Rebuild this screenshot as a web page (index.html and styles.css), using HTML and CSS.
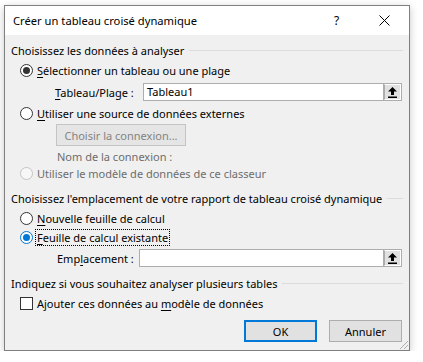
FILE: index.html
```html
<!DOCTYPE html>
<html lang="fr">
<head>
    <meta charset="UTF-8">
    <title>Créer un tableau croisé dynamique</title>
    <link rel="stylesheet" href="styles.css">
</head>
<body>
    <div class="dialog">
        <div class="title-bar">
            <div class="title-text">Créer un tableau croisé dynamique</div>
            <div class="title-help">?</div>
            <div class="title-close">
                <svg width="11" height="11" viewBox="0 0 11 11"><path d="M0.5 0.5 L10.5 10.5 M10.5 0.5 L0.5 10.5" stroke="#000" stroke-width="1"/></svg>
            </div>
        </div>

        <div class="dialog-body">
            <!-- Source des données -->
            <div class="group-head row-1">Choisissez les données à analyser</div>

            <div class="option row-2">
                <span class="radio checked-dark"></span>
                <span><u>S</u>électionner un tableau ou une plage</span>
            </div>

            <div class="field row-3">
                <span class="field-label"><u>T</u>ableau/Plage :</span>
                <div class="ref-input">
                    <span class="ref-value">Tableau1</span>
                    <span class="ref-btn">
                        <svg width="9" height="11" viewBox="0 0 9 11"><path d="M4.5 0 L9 4.5 L6 4.5 L6 8 L3 8 L3 4.5 L0 4.5 Z" fill="#000"/><rect x="0" y="9.5" width="9" height="1.5" fill="#000"/></svg>
                    </span>
                </div>
            </div>

            <div class="option row-4">
                <span class="radio"></span>
                <span><u>U</u>tiliser une source de données externes</span>
            </div>

            <div class="row-5">
                <button class="win-btn disabled-btn">Choisir la connexion...</button>
            </div>

            <div class="sub-label row-6">Nom de la connexion :</div>

            <div class="option disabled row-7">
                <span class="radio"></span>
                <span>Utiliser le modèle de données de ce classeur</span>
            </div>

            <!-- Emplacement -->
            <div class="group-head row-8">Choisissez l'emplacement de votre rapport de tableau croisé dynamique</div>

            <div class="option row-9">
                <span class="radio"></span>
                <span><u>N</u>ouvelle feuille de calcul</span>
            </div>

            <div class="option row-10">
                <span class="radio checked-blue"></span>
                <span class="focus-label"><u>F</u>euille de calcul existante</span>
            </div>

            <div class="field row-11">
                <span class="field-label narrow">Emp<u>l</u>acement :</span>
                <div class="ref-input">
                    <span class="ref-value"></span>
                    <span class="ref-btn">
                        <svg width="9" height="11" viewBox="0 0 9 11"><path d="M4.5 0 L9 4.5 L6 4.5 L6 8 L3 8 L3 4.5 L0 4.5 Z" fill="#000"/><rect x="0" y="9.5" width="9" height="1.5" fill="#000"/></svg>
                    </span>
                </div>
            </div>

            <!-- Plusieurs tables -->
            <div class="group-head row-12">Indiquez si vous souhaitez analyser plusieurs tables</div>

            <div class="option row-13">
                <span class="checkbox"></span>
                <span>Ajouter ces données au <u>m</u>odèle de données</span>
            </div>

            <div class="dialog-footer">
                <button class="win-btn default-btn">OK</button>
                <button class="win-btn">Annuler</button>
            </div>
        </div>
        <div class="grip"></div>
    </div>
</body>
</html>
```

FILE: styles.css
```css
:root {
    --bg-color: #f0f0f0;
    --border-color: #7f7f7f;
    --line-color: #dcdcdc;
    --accent: #0078d7;
    --disabled-text: #6d6d6d;
}

body {
    margin: 0;
    padding: 0;
    background-color: #ffffff;
    font-family: 'Noto Sans', 'Open Sans', sans-serif;
    font-size: 11px;
    color: #000;
}

u {
    text-decoration: underline;
    text-underline-offset: 2px;
}

.dialog {
    position: relative;
    margin: 5px 0 0 4px;
    width: 404px;
    height: 344px;
    border: 1px solid var(--border-color);
    background-color: var(--bg-color);
    box-shadow: 0 2px 8px rgba(0, 0, 0, 0.22);
}

.title-bar {
    height: 29px;
    background-color: #ffffff;
    display: flex;
    align-items: center;
}

.title-text {
    flex: 1;
    padding-left: 8px;
    font-size: 11.2px;
}

.title-help {
    width: 12px;
    font-size: 12px;
    margin-right: 33px;
}

.title-close {
    width: 11px;
    height: 11px;
    margin-right: 19px;
    display: flex;
}

.dialog-body {
    padding: 7px 6px 0 6px;
}

.group-head {
    height: 16px;
    display: flex;
    align-items: center;
    gap: 5px;
    white-space: nowrap;
}

.group-head::after {
    content: "";
    flex: 1;
    height: 1px;
    background-color: var(--line-color);
}

.option {
    height: 16px;
    display: flex;
    align-items: center;
    gap: 4px;
    padding-left: 9px;
    white-space: nowrap;
}

.radio {
    width: 11px;
    height: 11px;
    border: 1px solid #333;
    border-radius: 50%;
    background-color: #fff;
    position: relative;
    flex-shrink: 0;
}

.radio.checked-dark::after,
.radio.checked-blue::after {
    content: "";
    position: absolute;
    left: 2px;
    top: 2px;
    width: 7px;
    height: 7px;
    border-radius: 50%;
    background-color: #333;
}

.radio.checked-blue {
    border-color: var(--accent);
}

.radio.checked-blue::after {
    background-color: var(--accent);
}

.option.disabled {
    color: var(--disabled-text);
}

.option.disabled .radio {
    border-color: #c4c4c4;
    background-color: #f7f7f7;
}

.checkbox {
    width: 11px;
    height: 11px;
    border: 1px solid #333;
    background-color: #fff;
    flex-shrink: 0;
}

.focus-label {
    outline: 1px dotted #000;
    outline-offset: 0;
    padding: 0 1px;
    margin-left: -1px;
}

.field {
    height: 18px;
    display: flex;
    align-items: center;
    padding-left: 44px;
    white-space: nowrap;
}

.field-label {
    width: 88px;
}

.field-label.narrow {
    width: 82px;
    padding-left: 2px;
}

.ref-input {
    flex: 1;
    height: 16px;
    margin-right: 1px;
    border: 1px solid #adadad;
    background-color: #fff;
    display: flex;
}

.ref-value {
    flex: 1;
    padding-left: 3px;
    line-height: 16px;
}

.ref-btn {
    width: 17px;
    border: 1px solid #fff;
    outline: 1px solid #adadad;
    background-color: #e1e1e1;
    display: flex;
    align-items: center;
    justify-content: center;
    box-sizing: border-box;
    border-left: 1px solid #adadad;
}

.sub-label {
    height: 16px;
    line-height: 16px;
    padding-left: 46px;
    color: var(--disabled-text);
}

.win-btn {
    font-family: inherit;
    font-size: 11px;
    height: 22px;
    background-color: #e1e1e1;
    border: 1px solid #adadad;
    color: #000;
    padding: 0;
}

.disabled-btn {
    margin-left: 45px;
    width: 130px;
    background-color: #e5e5e5;
    border-color: #c4c4c4;
    color: #838383;
}

.dialog-footer {
    display: flex;
    justify-content: flex-end;
    gap: 12px;
    padding-right: 1px;
}

.dialog-footer .win-btn {
    width: 73px;
}

.default-btn {
    border: 2px solid var(--accent);
}

/* espacements verticaux */
.row-2 { margin-top: 4px; }
.row-3 { margin-top: 5px; }
.row-4 { margin-top: 4px; }
.row-5 { margin-top: 3px; }
.row-6 { margin-top: 3px; }
.row-7 { margin-top: 0; }
.row-8 { margin-top: 9px; }
.row-9 { margin-top: 4px; }
.row-10 { margin-top: 3px; }
.row-11 { margin-top: 4px; }
.row-12 { margin-top: 8px; }
.row-13 { margin-top: 4px; }
.dialog-footer { margin-top: 9px; }

.grip {
    position: absolute;
    right: 1px;
    bottom: 1px;
    width: 10px;
    height: 10px;
    background: repeating-linear-gradient(135deg, transparent 0 2px, #b0b0b0 2px 3px);
    clip-path: polygon(100% 0, 100% 100%, 0 100%);
}
```
